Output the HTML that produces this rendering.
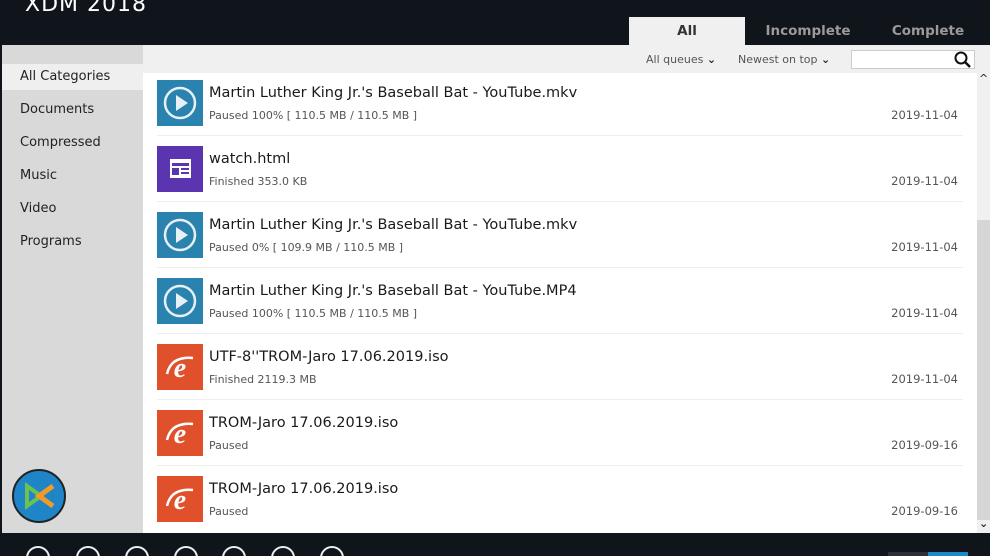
<!DOCTYPE html><html><head><style>
html,body{margin:0;width:990px;height:556px;overflow:hidden}
body{background:#10141b;font-family:"DejaVu Sans","Liberation Sans",sans-serif;position:relative}
.a{position:absolute}
.row{position:absolute;left:143px;width:834px;height:66px}
.ic{position:absolute;left:14px;top:7px;width:46px;height:46px}
.t{position:absolute;left:66px;top:12px;font-size:14.5px;color:#1a1a1a;white-space:nowrap}
.s{position:absolute;left:66px;top:36px;font-size:11px;color:#555;white-space:nowrap}
.d{position:absolute;right:19px;top:35px;font-size:11.5px;color:#555}
.sep{position:absolute;left:14px;right:14px;top:62px;height:1px;background:#eee}
.cat{position:absolute;left:20px;font-size:13px;color:#222}
.bc{position:absolute;top:546px;width:24px;height:24px;border:2px solid #eee;border-radius:50%;box-sizing:border-box}
</style></head><body>
<div class="a" style="left:25px;top:-8px;font-size:22px;color:#fff;letter-spacing:1px">XDM 2018</div>
<div class="a" style="left:629px;top:17px;width:116px;height:28px;background:#f0f0f0"></div>
<div class="a" style="left:629px;top:23px;width:116px;text-align:center;font-weight:bold;font-size:13.5px;color:#333">All</div>
<div class="a" style="left:750px;top:23px;width:116px;text-align:center;font-weight:bold;font-size:13.5px;color:#9a9a9a">Incomplete</div>
<div class="a" style="left:870px;top:23px;width:116px;text-align:center;font-weight:bold;font-size:13.5px;color:#9a9a9a">Complete</div>
<div class="a" style="left:2px;top:45px;width:141px;height:488px;background:#d9d9d9"></div>
<div class="a" style="left:2px;top:64px;width:141px;height:26px;background:#efefef"></div>
<div class="cat" style="top:69px">All Categories</div>
<div class="cat" style="top:102px">Documents</div>
<div class="cat" style="top:135px">Compressed</div>
<div class="cat" style="top:168px">Music</div>
<div class="cat" style="top:201px">Video</div>
<div class="cat" style="top:234px">Programs</div>
<div class="a" style="left:143px;top:45px;width:847px;height:28px;background:#f0f0f0"></div>
<div class="a" style="left:646px;top:53px;font-size:11px;color:#555">All queues <b style="color:#222">⌄</b></div>
<div class="a" style="left:738px;top:53px;font-size:11px;color:#555">Newest on top <b style="color:#222">⌄</b></div>
<div class="a" style="left:851px;top:50px;width:124px;height:19px;background:#fff;border:1px solid #ccc;box-sizing:border-box"></div>
<svg class="a" style="left:954px;top:51px" width="18" height="18"><circle cx="7" cy="7" r="5.5" fill="none" stroke="#111" stroke-width="2"/><line x1="11" y1="11" x2="16" y2="16" stroke="#111" stroke-width="2.5"/></svg>
<div class="a" style="left:143px;top:73px;width:834px;height:460px;background:#fff"></div>
<div class="a" style="left:977px;top:73px;width:13px;height:460px;background:#f0f0f0"></div>
<div class="a" style="left:977px;top:220px;width:13px;height:300px;background:#d6d6d6"></div>
<div class="a" style="left:979px;top:72px;font-size:11px;color:#222">^</div>
<div class="a" style="left:979px;top:517px;font-size:11px;color:#222;font-weight:bold">⌄</div>
<svg width="0" height="0" style="position:absolute"><defs>
<g id="v"><rect width="46" height="46" fill="#2a82ae"/><circle cx="23" cy="23" r="15" fill="none" stroke="#e6f0f5" stroke-width="2.5"/><path d="M19 15 L31 23 L19 31Z" fill="#e6f0f5"/></g>
<g id="h"><rect width="46" height="46" fill="#5b35b0"/><rect x="13" y="13" width="21" height="19" fill="#fff"/><rect x="15" y="17" width="17" height="3" fill="#5b35b0"/><rect x="15" y="22" width="7" height="7" fill="#5b35b0"/><rect x="24" y="22" width="8" height="2" fill="#5b35b0"/><rect x="24" y="26" width="8" height="2" fill="#5b35b0"/></g>
<g id="e"><rect width="46" height="46" fill="#e0502a"/><text x="23" y="33" text-anchor="middle" font-family="Liberation Serif" font-style="italic" font-weight="bold" font-size="28" fill="#fff">e</text><path d="M10 30 Q14 12 36 14" fill="none" stroke="#fff" stroke-width="2.5"/></g>
</defs></svg>
<div class="row" style="top:73px"><svg class="ic"><use href="#v"/></svg><div class="t">Martin Luther King Jr.'s Baseball Bat - YouTube.mkv</div><div class="s">Paused 100% [ 110.5 MB / 110.5 MB ]</div><div class="d">2019-11-04</div><div class="sep"></div></div>
<div class="row" style="top:139px"><svg class="ic"><use href="#h"/></svg><div class="t">watch.html</div><div class="s">Finished 353.0 KB</div><div class="d">2019-11-04</div><div class="sep"></div></div>
<div class="row" style="top:205px"><svg class="ic"><use href="#v"/></svg><div class="t">Martin Luther King Jr.'s Baseball Bat - YouTube.mkv</div><div class="s">Paused 0% [ 109.9 MB / 110.5 MB ]</div><div class="d">2019-11-04</div><div class="sep"></div></div>
<div class="row" style="top:271px"><svg class="ic"><use href="#v"/></svg><div class="t">Martin Luther King Jr.'s Baseball Bat - YouTube.MP4</div><div class="s">Paused 100% [ 110.5 MB / 110.5 MB ]</div><div class="d">2019-11-04</div><div class="sep"></div></div>
<div class="row" style="top:337px"><svg class="ic"><use href="#e"/></svg><div class="t">UTF-8''TROM-Jaro 17.06.2019.iso</div><div class="s">Finished 2119.3 MB</div><div class="d">2019-11-04</div><div class="sep"></div></div>
<div class="row" style="top:403px"><svg class="ic"><use href="#e"/></svg><div class="t">TROM-Jaro 17.06.2019.iso</div><div class="s">Paused</div><div class="d">2019-09-16</div><div class="sep"></div></div>
<div class="row" style="top:469px"><svg class="ic"><use href="#e"/></svg><div class="t">TROM-Jaro 17.06.2019.iso</div><div class="s">Paused</div><div class="d">2019-09-16</div></div>
<svg class="a" style="left:11px;top:468px" width="56" height="56"><circle cx="28" cy="28" r="26" fill="#1f85c8" stroke="#222" stroke-width="2"/><path d="M16 18 L30 28 L16 38Z" fill="none" stroke="#6cc24a" stroke-width="4"/><path d="M42 18 L28 28 L42 38" fill="none" stroke="#f39a2b" stroke-width="5"/></svg>
<div class="bc" style="left:26px"></div><div class="bc" style="left:76px"></div><div class="bc" style="left:125px"></div><div class="bc" style="left:174px"></div><div class="bc" style="left:222px"></div><div class="bc" style="left:271px"></div><div class="bc" style="left:320px"></div>
<div class="a" style="left:888px;top:552px;width:40px;height:4px;background:#2a2e35"></div>
<div class="a" style="left:928px;top:552px;width:40px;height:4px;background:#1a8ac6"></div>
</body></html>
